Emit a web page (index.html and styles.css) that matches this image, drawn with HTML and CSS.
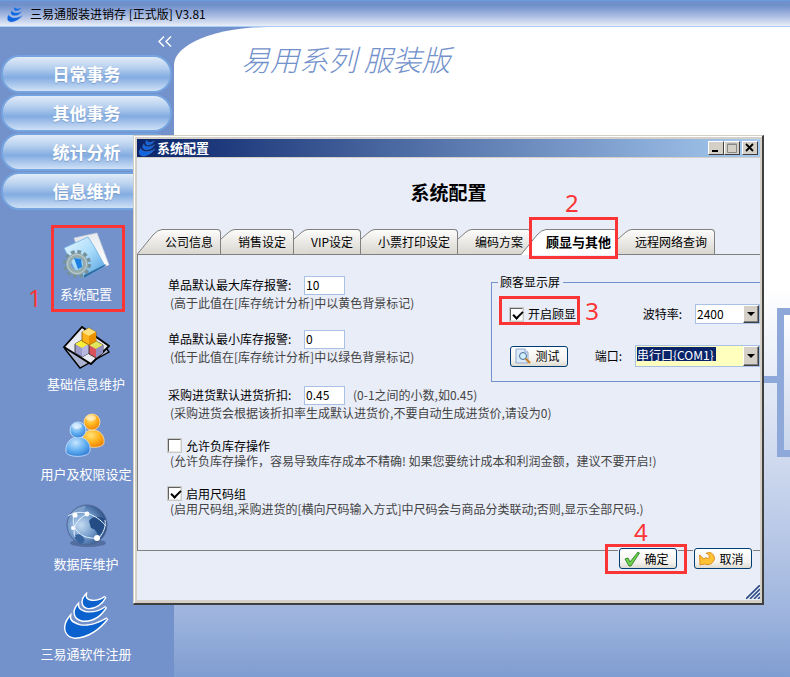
FILE: index.html
```html
<!DOCTYPE html>
<html lang="zh-CN">
<head>
    <meta charset="UTF-8">
    <meta name="viewport" content="width=device-width, initial-scale=1.0">
    <title>三易通服装进销存</title>
    <link rel="stylesheet" href="styles.css">
</head>
<body>

    <!-- shared logo and tab shading -->
    <svg class="defs" width="0" height="0" aria-hidden="true">
        <linearGradient id="tabface" x1="0" y1="0" x2="0" y2="1"><stop offset="0" stop-color="#fcfcfb"/><stop offset="1" stop-color="#d9d6cf"/></linearGradient>
        <symbol id="logo" viewBox="185 575 147 150">
            <path d="M257 586C244 600 246 620 262 624C285 628 308 612 319 590C305 602 285 606 272 602C262 600 256 594 257 586Z"/>
            <path d="M233 616C216 636 222 660 248 664C280 667 305 648 321 622C300 638 275 642 256 638C240 634 233 626 233 616Z"/>
            <path d="M208 653C186 680 190 712 222 717C262 718 300 690 325 658C295 676 262 685 238 679C216 672 207 664 208 653Z"/>
        </symbol>
    </svg>

    <header class="app-title">
        <svg class="logo-app" width="18" height="18"><use href="#logo"/></svg>
        <span>三易通服装进销存 [正式版] V3.81</span>
    </header>

    <div class="workspace">
        <nav class="sidebar">
            <button class="collapse" aria-label="收起">
                <svg width="14" height="11" viewBox="0 0 14 11"><path d="M6 .5L1 5.5L6 10.5M13 .5L8 5.5L13 10.5" fill="none" stroke="#fff" stroke-width="1.4"/></svg>
            </button>
            <div class="groups">
                <button class="group">日常事务</button>
                <button class="group">其他事务</button>
                <button class="group">统计分析</button>
                <button class="group">信息维护</button>
            </div>
            <div class="items">
                <a class="item" href="#">
                    <svg width="48" height="48" viewBox="0 0 48 48">
                        <defs>
                            <linearGradient id="folder" x1="0" y1="0" x2="1" y2="1"><stop offset="0" stop-color="#eaf8ff"/><stop offset=".5" stop-color="#a9dbfa"/><stop offset="1" stop-color="#4b9bdc"/></linearGradient>
                            <linearGradient id="paper" x1="0" y1="0" x2="1" y2="1"><stop offset="0" stop-color="#dfe4ea"/><stop offset="1" stop-color="#fff"/></linearGradient>
                        </defs>
                        <path d="M12 6L35 1L47 33L24 39Z" fill="url(#paper)" stroke="#cbd3de" stroke-width=".7"/>
                        <path d="M2 16L26 5L33 16L43 34L22 46L13 38Z" fill="url(#folder)" stroke="#6eb1e4" stroke-width=".8"/>
                        <path d="M22 46L43 34L44 32L22 43Z" fill="#2f6da3"/>
                        <circle cx="15" cy="32" r="12" fill="none" stroke="#74909a" stroke-width="4" stroke-dasharray="3.7 2.58"/>
                        <circle cx="15" cy="32" r="8.5" fill="none" stroke="#94abb0" stroke-width="5"/>
                        <circle cx="15" cy="32" r="9.5" fill="none" stroke="#c3d0cf" stroke-width="1"/>
                        <path d="M12 26L19 27L20 35L16 37Z" fill="#1b80e0"/>
                    </svg>
                    <span>系统配置</span>
                    <span class="callout callout-item"><b>1</b></span>
                </a>
                <a class="item" href="#">
                    <svg width="48" height="48" viewBox="0 0 48 48">
                        <path d="M3 27L18 46L47 30L40 20Z" fill="#aab4d0" stroke="#000" stroke-width="1.4"/>
                        <path d="M2 25L20 5L47 24L29 42Z" fill="#e7e9f3" stroke="#000" stroke-width="1.8"/>
                        <path d="M13 22L20 18L27 22V31L20 35L13 31Z" fill="#9c9ccc" stroke="#222" stroke-width=".8"/>
                        <path d="M13 22L20 18L27 22L20 26Z" fill="#f7ef3a"/><path d="M20 26L27 22V31L20 35Z" fill="#b8b8e0"/>
                        <path d="M27 23L34 19L41 23V31L34 36L27 32Z" fill="#d9535c" stroke="#222" stroke-width=".8"/>
                        <path d="M27 23L34 19L41 23L34 27Z" fill="#dfe65c"/><path d="M34 27L41 23V31L34 36Z" fill="#8f8fc2"/>
                        <path d="M20 10L27 6L34 10V19L27 23L20 19Z" fill="#ffb31a" stroke="#8a5a00" stroke-width=".8"/>
                        <path d="M20 10L27 6L34 10L27 14Z" fill="#ffe07a"/><path d="M27 14L34 10V19L27 23Z" fill="#e99100"/>
                    </svg>
                    <span>基础信息维护</span>
                </a>
                <a class="item" href="#">
                    <svg width="48" height="48" viewBox="0 0 48 48">
                        <defs>
                            <radialGradient id="orange" cx=".4" cy=".3" r=".8"><stop offset="0" stop-color="#ffe27a"/><stop offset=".5" stop-color="#ffb21c"/><stop offset="1" stop-color="#e87500"/></radialGradient>
                            <radialGradient id="blue" cx=".4" cy=".3" r=".8"><stop offset="0" stop-color="#c6e6ff"/><stop offset=".5" stop-color="#66b1f2"/><stop offset="1" stop-color="#2573cf"/></radialGradient>
                        </defs>
                        <path d="M20 30C20 20 26 18 31 18C38 18 43 24 42 31C41 37 22 37 20 30Z" fill="url(#orange)" stroke="#ffe3a8" stroke-width=".8"/>
                        <circle cx="30" cy="10" r="8" fill="url(#orange)" stroke="#ffe3a8" stroke-width=".8"/>
                        <path d="M4 40C3 31 9 25 16 25C24 25 29 31 28 39C27 46 5 46 4 40Z" fill="url(#blue)" stroke="#cfe6ff" stroke-width=".8"/>
                        <circle cx="16" cy="18" r="8" fill="url(#blue)" stroke="#cfe6ff" stroke-width=".8"/>
                        <ellipse cx="15" cy="14" rx="5" ry="3" fill="#fff" opacity=".5"/>
                        <ellipse cx="29" cy="6" rx="5" ry="3" fill="#fff" opacity=".5"/>
                    </svg>
                    <span>用户及权限设定</span>
                </a>
                <a class="item" href="#">
                    <svg width="48" height="48" viewBox="0 0 48 48">
                        <defs>
                            <radialGradient id="globe" cx=".35" cy=".5" r=".7"><stop offset="0" stop-color="#c5dcf2"/><stop offset=".5" stop-color="#6f98c9"/><stop offset="1" stop-color="#1f4177"/></radialGradient>
                        </defs>
                        <ellipse cx="26" cy="41" rx="18" ry="4" fill="#3f5684" opacity=".6"/>
                        <circle cx="25" cy="23" r="20" fill="url(#globe)" stroke="#506899" stroke-width="1"/>
                        <path d="M27 19C31 13 40 14 44 19C46 25 41 32 36 33C34 29 33 27 29 26Z" fill="#244d86"/>
                        <path d="M9 12C13 6 19 4 24 4L21 10L14 13L10 20L7 18Z" fill="#7d9fca"/>
                        <path d="M12 33L19 32L23 38L20 42C16 41 13 38 12 33Z" fill="#38639c"/>
                        <path d="M6 14C18 6 34 12 44 24M12 12C8 28 20 38 37 36M25 12C14 18 10 26 13 35M37 36C42 30 44 24 43 18" fill="none" stroke="#e4f1ff" stroke-width="1"/>
                        <circle cx="13" cy="13" r="2.6" fill="#fff"/><circle cx="25" cy="12" r="2.4" fill="#fff"/><circle cx="11" cy="26" r="2" fill="#fff"/><circle cx="35" cy="36" r="3" fill="#fff"/>
                    </svg>
                    <span>数据库维护</span>
                </a>
                <a class="item" href="#">
                    <svg class="logo-big" width="48" height="48"><use href="#logo"/></svg>
                    <span>三易通软件注册</span>
                </a>
            </div>
        </nav>

        <main class="desk">
            <h1>易用系列 服装版</h1>
            <div class="flow-line"></div>
            <div class="flow-box"></div>
        </main>
    </div>

    <section class="dialog" aria-label="系统配置">
        <div class="dialog-title">
            <svg class="logo-app" width="18" height="18"><use href="#logo"/></svg>
            <strong>系统配置</strong>
            <div class="win-buttons">
                <button aria-label="最小化"><svg width="12" height="10"><path d="M2 7h6v2H2z"/></svg></button>
                <button aria-label="最大化"><svg width="12" height="10"><path d="M1.5 1v8.5h9V1zM1 1.5h10" fill="none" stroke="#888"/></svg></button>
                <button class="close" aria-label="关闭"><svg width="12" height="10"><path d="M2 1l7 7M9 1l-7 7" stroke="#000" stroke-width="1.8"/></svg></button>
            </div>
        </div>

        <h2>系统配置</h2>

        <div class="tabs">
            <button class="tab">
                <svg width="25" height="26"><path class="face" d="M0 26L16 6Q21 .5 25 .5V26Z"/><path class="edge" d="M0 25.5L16 6Q21 .5 25 .5"/></svg><span>公司信息</span>
            </button>
            <button class="tab">
                <svg width="14" height="26"><path class="face" d="M0 26V10L8 3Q11 .5 14 .5V26Z"/><path class="edge" d="M0 10L8 3Q11 .5 14 .5"/></svg><span>销售设定</span>
            </button>
            <button class="tab">
                <svg width="14" height="26"><path class="face" d="M0 26V10L8 3Q11 .5 14 .5V26Z"/><path class="edge" d="M0 10L8 3Q11 .5 14 .5"/></svg><span>VIP设定</span>
            </button>
            <button class="tab">
                <svg width="14" height="26"><path class="face" d="M0 26V10L8 3Q11 .5 14 .5V26Z"/><path class="edge" d="M0 10L8 3Q11 .5 14 .5"/></svg><span>小票打印设定</span>
            </button>
            <button class="tab">
                <svg width="14" height="26"><path class="face" d="M0 26V10L8 3Q11 .5 14 .5V26Z"/><path class="edge" d="M0 10L8 3Q11 .5 14 .5"/></svg><span>编码方案</span>
            </button>
            <button class="tab active">
                <svg width="25" height="26"><path class="face" d="M0 26L16 6Q21 .5 25 .5V26Z"/><path class="edge" d="M0 25.5L16 6Q21 .5 25 .5"/></svg><span>顾显与其他</span>
                <span class="callout callout-tab"><b>2</b></span>
            </button>
            <button class="tab">
                <svg width="14" height="26"><path class="face" d="M0 26V10L8 3Q11 .5 14 .5V26Z"/><path class="edge" d="M0 10L8 3Q11 .5 14 .5"/></svg><span>远程网络查询</span>
            </button>
        </div>

        <form class="panel" id="config">
            <div class="panel-top">
                <div class="stock">
                    <div class="setting">
                        <div class="line"><label for="max-stock">单品默认最大库存报警:</label><input id="max-stock" type="text" value="10"></div>
                        <p class="hint">(高于此值在[库存统计分析]中以黄色背景标记)</p>
                    </div>
                    <div class="setting">
                        <div class="line"><label for="min-stock">单品默认最小库存报警:</label><input id="min-stock" type="text" value="0"></div>
                        <p class="hint">(低于此值在[库存统计分析]中以绿色背景标记)</p>
                    </div>
                </div>
                <fieldset>
                    <legend>顾客显示屏</legend>
                    <div class="display-row">
                        <label class="check"><input type="checkbox" checked>开启顾显<span class="callout callout-check"><b>3</b></span></label>
                        <label class="field" for="baud">波特率:</label>
                        <span class="drop baud">
                            <select id="baud"><option>2400</option></select>
                            <i class="arrow"></i>
                        </span>
                    </div>
                    <div class="display-row">
                        <button type="button" class="btn">
                            <svg width="16" height="16" viewBox="0 0 16 16"><path d="M1 1h9l3 3v11H1z" fill="#dceafa" stroke="#8fa9cf"/><path d="M10 1v3h3" fill="#fff" stroke="#8fa9cf"/><circle cx="8" cy="8" r="3.5" fill="#cdeefa" stroke="#4a6c94"/><path d="M10.5 10.5L15 15" stroke="#c98431" stroke-width="2.4"/></svg>
                            测试
                        </button>
                        <label class="field" for="port">端口:</label>
                        <span class="drop port">
                            <select id="port"><option>串行口{COM1}</option></select>
                            <i class="arrow"></i>
                        </span>
                    </div>
                </fieldset>
            </div>
            <div class="setting">
                <div class="line"><label for="discount">采购进货默认进货折扣:</label><input id="discount" type="text" value="0.45"><span class="hint">(0-1之间的小数,如0.45)</span></div>
                <p class="hint">(采购进货会根据该折扣率生成默认进货价,不要自动生成进货价,请设为0)</p>
            </div>
            <div class="setting">
                <label class="check"><input type="checkbox">允许负库存操作</label>
                <p class="hint">(允许负库存操作，容易导致库存成本不精确! 如果您要统计成本和利润金额，建议不要开启!)</p>
            </div>
            <div class="setting">
                <label class="check"><input type="checkbox" checked>启用尺码组</label>
                <p class="hint">(启用尺码组,采购进货的[横向尺码输入方式]中尺码会与商品分类联动;否则,显示全部尺码.)</p>
            </div>
        </form>

        <div class="actions">
            <button type="submit" form="config" class="btn">
                <svg width="16" height="16" viewBox="0 0 16 16"><path d="M1 8L4 7L6 11L14 1L15.5 2L7 15H5Z" fill="#6ed34a" stroke="#2e7d2b" stroke-width=".9"/></svg>
                确定
                <span class="callout callout-ok"><b>4</b></span>
            </button>
            <button type="button" class="btn">
                <svg width="16" height="16" viewBox="0 0 16 16"><path d="M.6 4L5 8L7 6.5C9 8.5 11 7 10 4.5C9.5 3 8 2.5 7 2.5C10 .2 15 2 15.4 7C15.4 12 10 15 5.5 13L1 14Z" fill="#ffc233" stroke="#dd8414" stroke-width=".9"/></svg>
                取消
            </button>
        </div>
        <div class="status">
            <svg width="14" height="14"><path d="M0 14L14 0M4 14L14 4M8 14L14 8M12 14L14 12" stroke="#2b4a85" stroke-width="1.6"/></svg>
        </div>
    </section>

</body>
</html>
```
FILE: styles.css
```css
* {
    box-sizing: border-box;
}
body {
    margin: 0;
    min-height: 100vh;
    display: flex;
    flex-direction: column;
    position: relative;
    overflow: hidden;
    background-color: #7391cb;
    font-family: "Noto Sans CJK SC", sans-serif;
    font-size: 12px;
    line-height: 16px;
    color: #000;
}
button, input, select {
    font: inherit;
    color: inherit;
    padding: 0;
    margin: 0;
}
h1, h2, p {
    margin: 0;
}
.defs {
    position: absolute;
}

/* title bar of the application */
.app-title {
    height: 27px;
    padding: 1px 6px 0;
    display: flex;
    align-items: center;
    gap: 6px;
    background: linear-gradient(#6f90cc, #7391cb 20%, #a9bce2 60%, #e9eef8);
    border-top: 1px solid #6a9ce0;
    border-bottom: 1px solid #a9cdf7;
}
.logo-app {
    fill: #0f66e0;
    stroke: #8fb0e4;
    stroke-width: 4px;
}
.logo-big {
    fill: #0b62cf;
    stroke: #fff;
    stroke-width: 9px;
    paint-order: stroke;
}

.workspace {
    flex: 1;
    display: flex;
}
.sidebar {
    width: 174px;
    display: flex;
    flex-direction: column;
}
.collapse {
    align-self: flex-end;
    height: 28px;
    padding-top: 2px;
    margin-right: 2px;
    border: none;
    background: none;
}
.groups {
    display: flex;
    flex-direction: column;
    gap: 1px;
    padding: 0 2px 0 1px;
}
.group {
    height: 38px;
    border: 2px solid #75a3df;
    border-radius: 18px;
    background: linear-gradient(#e0ebf8, #b9d1ef 30%, #83ace1 60%, #a9c6ec 80%, #cfe2f6);
    color: #fff;
    font-size: 17px;
    font-weight: bold;
    text-shadow: 0 1px 1px #7f9fcb;
}
.items {
    display: flex;
    flex-direction: column;
    gap: 20px;
    padding: 22px 2px 0 0;
}
.item {
    position: relative;
    height: 70px;
    display: flex;
    flex-direction: column;
    align-items: center;
    justify-content: space-between;
    color: #fff;
    font-size: 13px;
    text-decoration: none;
}

.desk {
    flex: 1;
    position: relative;
    overflow: hidden;
    background: linear-gradient(#fff 40%, #e9eef8 52%, #c3d0ea 73%, #9fb5de 90%, #7f9dd1);
    border-top-left-radius: 94px 38px;
}
.desk h1 {
    padding: 11px 0 0 67px;
    font-size: 29px;
    line-height: 40px;
    font-weight: 300;
    font-style: italic;
    color: #7391cb;
}
.flow-line, .flow-box {
    position: absolute;
    right: 0;
    background-color: #8ea8d9;
}
.flow-line {
    right: 11px;
    top: 349px;
    width: 30px;
    height: 7px;
}
.flow-box {
    top: 281px;
    width: 13px;
    height: 149px;
    border: 7px solid #8ea8d9;
    border-right: none;
    background: linear-gradient(#fff, #c8d5ec);
}

/* dialog window */
.dialog {
    position: absolute;
    left: 133px;
    right: 26px;
    top: 135px;
    border: 1px solid #d4d0c8;
    border-right: 2px solid #404040;
    border-bottom: 2px solid #404040;
    box-shadow: inset 1px 1px #fff;
    padding: 3px 2px 3px 3px;
    background: #d4d0c8;
}
.dialog > * {
    background-color: #e9edf8;
}
.dialog .dialog-title {
    height: 18px;
    display: flex;
    align-items: center;
    gap: 1px;
    padding: 0 2px 0 1px;
    background: linear-gradient(to right, #0a246a, #a6caf0);
    color: #fff;
    margin-bottom: 1px;
}
.dialog-title .logo-app {
    stroke: #4f7cc4;
}
.dialog-title strong {
    font-size: 13px;
}
.win-buttons {
    margin-left: auto;
    display: flex;
}
.win-buttons button {
    width: 16px;
    height: 14px;
    display: flex;
    align-items: center;
    justify-content: center;
    background-color: #d4d0c8;
    border: 1px solid;
    border-color: #fff #404040 #404040 #fff;
}
.win-buttons .close {
    margin-left: 2px;
}
.dialog h2 {
    padding: 20px 0 23px;
    text-align: center;
    font-size: 19px;
    line-height: 28px;
}

.tabs {
    display: flex;
    height: 26px;
    border-bottom: 1px solid #808080;
}
.tab {
    position: relative;
    height: 26px;
    display: flex;
    border: none;
    background: none;
    white-space: nowrap;
}
.tab > span:not(.callout) {
    height: 26px;
    padding: 4px 7px 0 3px;
    border-top: 1px solid #808080;
    border-right: 1px solid #808080;
    border-bottom: 1px solid #808080;
    border-top-right-radius: 4px;
    background: linear-gradient(#fcfcfb, #d9d6cf);
}
.tab:not(.active) svg {
    height: 25px;
}
.tab .face {
    fill: url(#tabface);
}
.tab .edge {
    fill: none;
    stroke: #808080;
}
.tab.active {
    z-index: 1;
    margin-left: -10px;
    font-size: 13px;
    font-weight: bold;
}
.tab.active > span:not(.callout) {
    padding: 4px 6px 0 0;
    background: #fff;
    border-bottom-color: #fff;
}
.tab.active .face {
    fill: #fff;
}

.panel {
    border-left: 1px solid #808080;
    border-bottom: 1px solid #808080;
    padding: 19px 0 33px 30px;
    display: flex;
    flex-direction: column;
    gap: 17px;
}
.panel-top {
    display: grid;
    grid-template-columns: 323px 1fr;
    margin-bottom: -14px;
}
.stock {
    display: flex;
    flex-direction: column;
    gap: 18px;
    padding-top: 1px;
}
.line {
    display: flex;
    align-items: center;
    height: 20px;
}
.line label {
    width: 136px;
}
.line .hint {
    padding-left: 8px;
}
.line input {
    width: 41px;
    height: 19px;
    padding: 0 1px 2px;
    border: 1px solid #a9c1e4;
    background-color: #fff;
}
.hint {
    color: #444;
    padding-left: 2px;
    white-space: nowrap;
}
.check {
    position: relative;
    display: flex;
    align-items: center;
    gap: 5px;
    height: 15px;
}
.check input {
    appearance: none;
    width: 13px;
    height: 13px;
    border: 1px solid;
    border-color: #606060 #e8e6e0 #e8e6e0 #606060;
    box-shadow: 0 0 0 1px #c9c9c6;
    background-color: #fff;
}
.check input:checked::before {
    content: "";
    display: block;
    width: 8px;
    height: 4px;
    margin: 2px 0 0 2px;
    border: solid #000;
    border-width: 0 0 2px 2px;
    transform: rotate(-45deg);
}

fieldset {
    margin: 0;
    min-width: 0;
    padding: 13px 0 14px 18px;
    border: 1px solid #7391cb;
    border-right: none;
    height: 108px;
}
legend {
    margin-left: -12px;
    padding: 0 3px 0 2px;
}
.display-row {
    display: flex;
    align-items: center;
    height: 22px;
    margin-bottom: 20px;
}
.field {
    margin-left: auto;
}
.drop {
    position: relative;
    display: flex;
    height: 20px;
    border: 1px solid #a9c1e4;
    background-color: #fff;
}
.baud {
    width: 65px;
    margin-left: 13px;
}
.port {
    width: 125px;
    height: 22px;
    margin-left: 13px;
    background-color: #ffffbe;
}
.drop select {
    appearance: none;
    flex: 1;
    width: 100%;
    border: none;
    padding: 0 1px;
    background: none;
}
.port select {
    color: #fff;
    background: linear-gradient(#0a246a, #0a246a) 1px 1px / 79px 14px no-repeat;
    padding-bottom: 3px;
}
.arrow {
    position: absolute;
    right: 0;
    top: 0;
    bottom: 0;
    width: 16px;
    display: flex;
    align-items: center;
    justify-content: center;
    background-color: #d4d0c8;
    border: 1px solid;
    border-color: #fff #404040 #404040 #fff;
    box-shadow: inset -1px -1px #808080;
    pointer-events: none;
}
.arrow::before {
    content: "";
    border: 4px solid transparent;
    border-top-color: #000;
    border-bottom: none;
}

.btn {
    position: relative;
    width: 58px;
    height: 21px;
    display: flex;
    align-items: center;
    justify-content: center;
    gap: 4px;
    padding-right: 3px;
    border: 1px solid #003c74;
    border-radius: 3px;
    background: linear-gradient(#fff, #f3f2ee 70%, #dedbd0);
    box-shadow: 0 0 0 1px #e9edf8;
    white-space: nowrap;
}
.dialog .actions {
    position: relative;
    display: flex;
    justify-content: flex-end;
    gap: 17px;
    height: 18px;
    padding-right: 8px;
}
.actions .btn {
    margin-top: -3px;
}
.status {
    display: flex;
    justify-content: flex-end;
    align-items: flex-end;
    height: 31px;
    padding-bottom: 1px;
}

/* red marks with their step numbers */
.callout {
    position: absolute;
    border: 3px solid #fb3535;
    pointer-events: none;
}
.callout b {
    position: absolute;
    font-family: "Noto Sans", sans-serif;
    font-size: 24px;
    line-height: 24px;
    font-weight: normal;
    color: #fb3535;
}
.callout-item {
    left: 51px;
    right: 47px;
    top: -7px;
    bottom: -10px;
}
.callout-item b {
    left: -26px;
    bottom: -1px;
}
.callout-tab {
    left: 8px;
    right: 0;
    top: -12px;
    bottom: -4px;
}
.callout-tab b {
    left: 33px;
    top: -29px;
}
.callout-check {
    left: -11px;
    right: -4px;
    top: -11px;
    bottom: -3px;
}
.callout-check b {
    right: -22px;
    top: 0;
}
.callout-ok {
    left: -15px;
    right: -11px;
    top: -5px;
    bottom: -6px;
}
.callout-ok b {
    left: 26px;
    top: -27px;
}
```
